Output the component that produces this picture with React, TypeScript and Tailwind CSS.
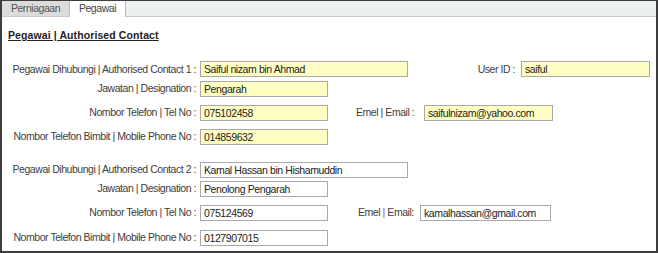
import React from "react";

type FieldProps = {
  value: string;
  w: string;
  yellow?: boolean;
};

function Field({ value, w, yellow }: FieldProps) {
  return (
    <input
      readOnly
      value={value}
      className={`${w} h-[16px] shrink-0 border border-[#a9a9a9] px-[3px] text-[10.5px] tracking-[-0.4px] leading-[14px] text-[#222] outline-none ${
        yellow ? "bg-[#ffffc4]" : "bg-white"
      }`}
    />
  );
}

function Label({ children }: { children: React.ReactNode }) {
  return (
    <span className="w-[198px] shrink-0 pr-[4px] text-right whitespace-nowrap">
      {children}
    </span>
  );
}

export default function App() {
  return (
    <div
      className="w-[658px] h-[253px] bg-white border-x-2 border-b-2 border-t border-[#3d3d3d] text-[10.5px] tracking-[-0.45px] text-[#404040] overflow-hidden"
      style={{ fontFamily: "'Liberation Sans', Arial, sans-serif" }}
    >
      {/* Tabs */}
      <div className="h-[16px] flex bg-[#edf0f1] border-b border-[#c9cbcc]">
        <div className="w-[68px] flex items-center justify-center bg-[#dcdcdc] border-r border-[#b9b9b9] text-[#555]">
          Perniagaan
        </div>
        <div className="w-[56px] h-[16px] flex items-center justify-center bg-white border-r border-[#b9b9b9] text-[#444]">
          Pegawai
        </div>
      </div>

      <div className="flex flex-col">
        <div className="mt-[11px] ml-[6px] h-[14px] leading-[14px] text-[10.5px] tracking-[0.1px] font-bold underline text-[#222]">
          Pegawai | Authorised Contact
        </div>

        {/* Contact 1 */}
        <div className="mt-[19px] flex items-center">
          <Label>Pegawai Dihubungi | Authorised Contact 1 :</Label>
          <Field value="Saiful nizam bin Ahmad" w="w-[208px]" yellow />
          <span className="w-[107px] shrink-0 text-right">User ID :</span>
          <span className="ml-[6px]">
            <Field value="saiful" w="w-[129px]" yellow />
          </span>
        </div>
        <div className="mt-[3px] flex items-center">
          <Label>Jawatan | Designation :</Label>
          <Field value="Pengarah" w="w-[128px]" yellow />
        </div>
        <div className="mt-[8px] flex items-center">
          <Label>Nombor Telefon | Tel No :</Label>
          <Field value="075102458" w="w-[128px]" yellow />
          <span className="w-[96px] shrink-0 pl-[28px] whitespace-nowrap">Emel | Email :</span>
          <Field value="saifulnizam@yahoo.com" w="w-[129px]" yellow />
        </div>
        <div className="mt-[8px] flex items-center">
          <Label>Nombor Telefon Bimbit | Mobile Phone No :</Label>
          <Field value="014859632" w="w-[128px]" yellow />
        </div>

        {/* Contact 2 */}
        <div className="mt-[17px] flex items-center">
          <Label>Pegawai Dihubungi | Authorised Contact 2 :</Label>
          <Field value="Kamal Hassan bin Hishamuddin" w="w-[208px]" />
        </div>
        <div className="mt-[3px] flex items-center">
          <Label>Jawatan | Designation :</Label>
          <Field value="Penolong Pengarah" w="w-[128px]" />
        </div>
        <div className="mt-[8px] flex items-center">
          <Label>Nombor Telefon | Tel No :</Label>
          <Field value="075124569" w="w-[128px]" />
          <span className="w-[92px] shrink-0 pl-[30px] whitespace-nowrap">
            Emel <span className="text-[#8a5a9a]">|</span> Email:
          </span>
          <Field value="kamalhassan@gmail.com" w="w-[131px]" />
        </div>
        <div className="mt-[9px] flex items-center">
          <Label>Nombor Telefon Bimbit | Mobile Phone No :</Label>
          <Field value="0127907015" w="w-[128px]" />
        </div>
      </div>
    </div>
  );
}
